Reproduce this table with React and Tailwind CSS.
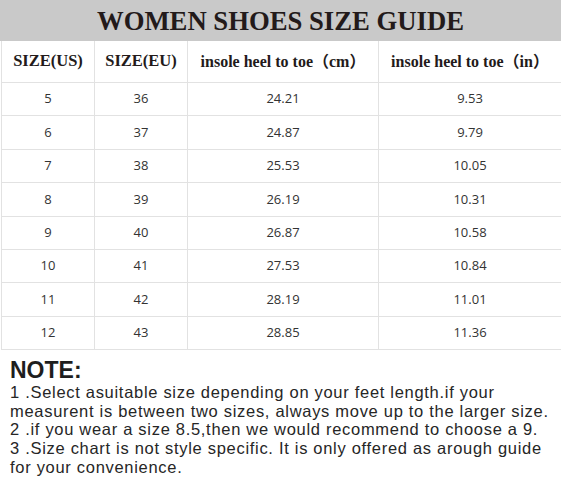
import React from "react";

const rows = [
  ["5", "36", "24.21", "9.53"],
  ["6", "37", "24.87", "9.79"],
  ["7", "38", "25.53", "10.05"],
  ["8", "39", "26.19", "10.31"],
  ["9", "40", "26.87", "10.58"],
  ["10", "41", "27.53", "10.84"],
  ["11", "42", "28.19", "11.01"],
  ["12", "43", "28.85", "11.36"],
];

const serif = { fontFamily: '"Liberation Serif", "Noto Sans CJK SC", serif' };

export default function App() {
  return (
    <div className="w-[561px] h-[489px] bg-white overflow-hidden">
      <div
        className="h-[41px] bg-[#c9c9c9] flex items-center justify-center text-[26.7px] font-bold text-[#231a1a] pt-[2px]"
        style={serif}
      >
        WOMEN SHOES SIZE GUIDE
      </div>
      <div className="ml-[1px] w-[560px] border-l border-[#e2e2e2]">
        <div
          className="grid grid-cols-[93px_93px_191px_182px] h-[42px] border-b border-[#e2e2e2] text-[#231a1a] font-bold"
          style={serif}
        >
          <div className="flex items-center justify-center border-r border-[#e2e2e2] text-[16.5px]">SIZE(US)</div>
          <div className="flex items-center justify-center border-r border-[#e2e2e2] text-[16.5px]">SIZE(EU)</div>
          <div className="flex items-center justify-center border-r border-[#e2e2e2] text-[16px]">insole heel to toe（cm）</div>
          <div className="flex items-center justify-center text-[16px]">insole heel to toe（in）</div>
        </div>
        {rows.map((r, i) => (
          <div
            key={i}
            className="grid grid-cols-[93px_93px_191px_182px] h-[33.4px] border-b border-[#e2e2e2] text-[13px] text-[#333]"
            style={{ fontFamily: '"Open Sans", "Liberation Sans", sans-serif' }}
          >
            <div className="flex items-center justify-center border-r border-[#e2e2e2]">{r[0]}</div>
            <div className="flex items-center justify-center border-r border-[#e2e2e2]">{r[1]}</div>
            <div className="flex items-center justify-center border-r border-[#e2e2e2]">{r[2]}</div>
            <div className="flex items-center justify-center">{r[3]}</div>
          </div>
        ))}
      </div>
      <div
        className="px-[10px] pt-[8px] text-[#262626]"
        style={{ fontFamily: '"Liberation Sans", Arial, sans-serif' }}
      >
        <div className="text-[23px] font-bold leading-[24px] text-[#1e1e1e]">NOTE:</div>
        <div className="text-[16.5px] leading-[18.6px] tracking-[0.7px] pt-[1px]">
          <p>1 .Select asuitable size depending on your feet length.if your</p>
          <p className="whitespace-nowrap">measurent is between two sizes, always move up to the larger size.</p>
          <p>2 .if you wear a size 8.5,then we would recommend to choose a 9.</p>
          <p className="whitespace-nowrap">3 .Size chart is not style specific. It is only offered as arough guide</p>
          <p>for your convenience.</p>
        </div>
      </div>
    </div>
  );
}
